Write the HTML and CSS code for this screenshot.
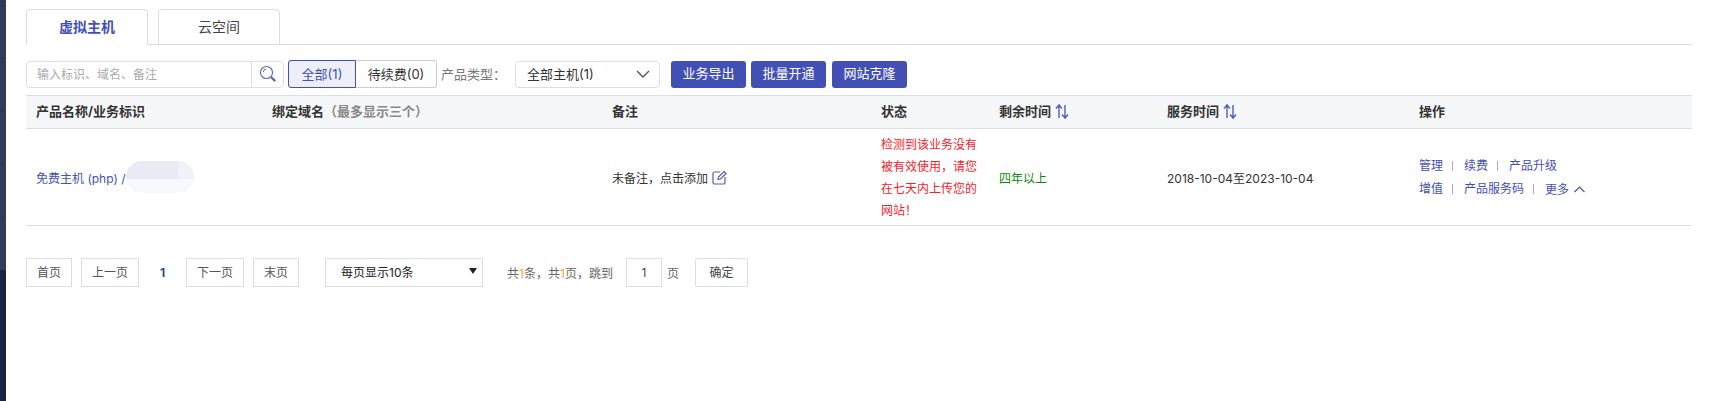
FILE: index.html
```html
<!DOCTYPE html>
<html lang="zh-CN">
<head>
<meta charset="utf-8">
<title>虚拟主机</title>
<link rel="stylesheet" href="styles.css">
</head>
<body>
<div class="app">
  <aside class="rail"></aside>
  <main class="main">
    <nav class="tabs">
      <a class="tab tab-active">虚拟主机</a>
      <a class="tab">云空间</a>
    </nav>
    <div class="toolbar">
      <div class="search">
        <span class="search-input">输入标识、域名、备注</span>
        <span class="search-btn">
          <svg width="18" height="18" viewBox="0 0 18 18" fill="none" stroke="#5a66c0"><circle cx="7.5" cy="7.5" r="6" stroke-width="1.1"/><path d="M4.300 7.200a3.200 3.200 0 0 1 2.700-3" stroke-width="1"/><path d="M12 12l4.200 4.200" stroke-width="2.400"/></svg>
        </span>
      </div>
      <div class="seg">
        <span class="seg-item seg-active">全部(1)</span><span class="seg-item seg-last">待续费(0)</span>
      </div>
      <span class="type-label">产品类型：</span>
      <div class="select">
        <span class="select-text">全部主机(1)</span>
        <svg width="14" height="8" viewBox="0 0 14 8" fill="none" stroke="#555" stroke-width="1.400"><path d="M1 1l6 6 6-6"/></svg>
      </div>
      <div class="actions">
        <button class="btn">业务导出</button>
        <button class="btn">批量开通</button>
        <button class="btn btn-last">网站克隆</button>
      </div>
    </div>
    <div class="table">
      <div class="row head">
        <div class="cell">产品名称/业务标识</div>
        <div class="cell">绑定域名<span class="hint">（最多显示三个）</span></div>
        <div class="cell">备注</div>
        <div class="cell">状态</div>
        <div class="cell">剩余时间
          <svg class="sort" width="14" height="15" viewBox="0 0 14 15" fill="none" stroke="#4f5cbc" stroke-width="1.400"><path d="M1 4.500L4 1v13M4 1l3 3.500M7 10.500l3 3.500V1M10 14l3-3.500"/></svg>
        </div>
        <div class="cell">服务时间
          <svg class="sort" width="14" height="15" viewBox="0 0 14 15" fill="none" stroke="#4f5cbc" stroke-width="1.400"><path d="M1 4.500L4 1v13M4 1l3 3.500M7 10.500l3 3.500V1M10 14l3-3.500"/></svg>
        </div>
        <div class="cell">操作</div>
      </div>
      <div class="row body">
        <div class="cell name"><a class="link">免费主机 (php) /</a><span class="blur"></span></div>
        <div class="cell"></div>
        <div class="cell note">未备注，点击添加
          <svg width="15" height="15" viewBox="0 0 15 15" fill="none" stroke="#4f5cbc" stroke-width="1.200"><path d="M8 2H2.500A1.500 1.500 0 0 0 1 3.500v9A1.500 1.500 0 0 0 2.500 14h9a1.500 1.500 0 0 0 1.500-1.500V7"/><path d="M6 9.500l.5-2.500L12 1.500 14 3.500 8.500 9z"/></svg>
        </div>
        <div class="cell warn">检测到该业务没有被有效使用，请您在七天内上传您的网站！</div>
        <div class="cell ok">四年以上</div>
        <div class="cell">2018-10-04至2023-10-04</div>
        <div class="cell ops">
          <div class="ops-line"><a class="link">管理</a><i class="sep"></i><a class="link">续费</a><i class="sep"></i><a class="link">产品升级</a></div>
          <div class="ops-line"><a class="link">增值</a><i class="sep"></i><a class="link">产品服务码</a><i class="sep"></i><a class="link more">更多
            <svg width="11" height="7" viewBox="0 0 11 7" fill="none" stroke="#4250b5" stroke-width="1.100"><path d="M.5 6l5-5 5 5"/></svg></a></div>
        </div>
      </div>
    </div>
    <div class="pager">
      <span class="pg">首页</span>
      <span class="pg">上一页</span>
      <span class="pg-cur">1</span>
      <span class="pg">下一页</span>
      <span class="pg">末页</span>
      <div class="size">每页显示10条<span class="size-arrow"></span></div>
      <span class="total">共<b class="num">1</b>条，共<b class="num">1</b>页，跳到</span>
      <span class="jump">1</span>
      <span class="jump-unit">页</span>
      <span class="confirm">确定</span>
    </div>
  </main>
</div>
</body>
</html>
```
FILE: styles.css
```css
* { box-sizing: border-box; }
html, body { margin: 0; height: 100%; background: #fff; }
body {
  font-family: Inter, "Noto Sans CJK SC", sans-serif;
  font-size: 12px;
  color: #333;
  overflow: hidden;
}
.app { display: flex; height: 401px; }
.rail {
  width: 6px;
  flex: none;
  background:
    repeating-linear-gradient(#2a3452 0 1px, #333d5b 1px 53px) 0 5px / 100% 265px no-repeat,
    linear-gradient(#333d5b 0 5px, #1a2542 5px);
}
.main { width: 1706px; padding: 9px 20px 0 20px; }

.tabs { display: flex; gap: 10px; height: 36px; border-bottom: 1px solid #ddd; }
.tab {
  width: 122px;
  height: 36px;
  border: 1px solid #ddd;
  border-radius: 4px 4px 0 0;
  border-bottom: 1px solid #ddd;
  font-size: 14px;
  line-height: 33px;
  text-align: center;
  color: #444;
  background: #fff;
}
.tab-active { color: #4250b5; font-weight: 700; border-bottom-color: #fff; }

.toolbar { display: flex; align-items: center; margin-top: 15px; height: 28px; }
.search {
  display: flex;
  width: 258px;
  height: 27px;
  border: 1px solid #ddd;
  border-radius: 4px;
}
.search-input { flex: 1; padding-left: 10px; line-height: 25px; color: #aaa; }
.search-btn {
  width: 32px;
  border-left: 1px solid #ddd;
  display: flex;
  align-items: center;
  justify-content: center;
}
.seg { display: flex; margin-left: 4px; font-size: 13px; height: 28px; }
.seg-item {
  display: block;
  line-height: 26px;
  border: 1px solid #ccc;
  text-align: center;
}
.seg-active {
  width: 68px;
  border-color: #4250b5;
  border-radius: 3px 0 0 3px;
  background: #eeeefa;
  color: #4250b5;
}
.seg-last { width: 81px; border-left: 0; border-radius: 0 3px 3px 0; }
.type-label { margin: -2px 0 0 4px; font-size: 13px; color: #777; width: 74px; }
.select {
  width: 145px;
  height: 27px;
  border: 1px solid #ddd;
  border-radius: 4px;
  padding: 0 9px 0 11px;
  font-size: 13px;
  display: flex;
  align-items: center;
  justify-content: space-between;
}
.select-text { margin-top: -2px; }
.actions { display: flex; gap: 5px; margin-left: 11px; }
.btn {
  width: 75px;
  height: 27px;
  padding: 0 0 3px;
  border: 0;
  border-radius: 3px;
  background: #4250b5;
  color: #fff;
  font: inherit;
  font-size: 13px;
}
.btn-last { margin-left: 1px; }

.table { margin-top: 7px; }
.row {
  display: grid;
  grid-template-columns: 236px 340px 269px 118px 168px 252px 1fr;
  border-bottom: 1px solid #ddd;
}
.head {
  height: 34px;
  background: #f6f7f9;
  border-top: 1px solid #ddd;
  font-size: 13px;
  font-weight: 700;
  color: #333;
}
.head .cell { line-height: 30px; }
.hint { color: #888; }
.cell { padding: 0 10px; }
.sort { vertical-align: -3px; margin-left: 1px; }
.body { height: 97px; align-items: center; }
.link { color: #4250b5; }
.name { display: flex; align-items: center; }
.blur {
  width: 68px;
  height: 32px;
  border-radius: 16px;
  background:
    linear-gradient(#0000 0 18px, #f8f9fd 18px),
    linear-gradient(90deg, #e8eaf4 0 52px, #f1f2f9 52px);
  margin-left: 0;
}
.note { display: flex; align-items: center; gap: 4px; }
.warn { color: #f5222d; line-height: 22px; padding: 2px 10px 0; }
.ok { color: #0a8a0a; }
.ops { padding-top: 1px; }
.ops-line { display: flex; align-items: center; line-height: 22px; }
.sep { width: 1px; height: 10px; background: #aaa; margin: 0 11px 0 9px; }
.more { display: inline-flex; align-items: center; gap: 5px; margin-top: 2px; }

.pager { display: flex; align-items: center; margin-top: 31px; height: 30px; color: #555; }
.pg {
  height: 29px;
  line-height: 27px;
  padding: 0 10px;
  border: 1px solid #ddd;
  margin-right: 9px;
}
.pg-cur { width: 47px; margin-left: -9px; text-align: center; font-weight: 700; color: #1f4f8f; }
.size {
  position: relative;
  width: 158px;
  height: 29px;
  line-height: 28px;
  margin-left: 17px;
  padding-left: 15px;
  border: 1px solid #ddd;
  color: #222;
}
.size-arrow {
  position: absolute;
  right: 5px;
  top: 9px;
  border: 4px solid transparent;
  border-top: 6px solid #222;
  border-bottom: 0;
}
.total { margin-left: 24px; color: #666; }
.num { font-weight: 400; color: #f5a623; }
.jump {
  width: 36px;
  height: 29px;
  line-height: 27px;
  margin-left: 13px;
  text-align: center;
  border: 1px solid #ddd;
  color: #444;
}
.jump-unit { margin-left: 5px; color: #666; }
.confirm {
  width: 53px;
  height: 29px;
  line-height: 27px;
  margin-left: 16px;
  text-align: center;
  border: 1px solid #ddd;
  border-radius: 2px;
  color: #444;
}
```
